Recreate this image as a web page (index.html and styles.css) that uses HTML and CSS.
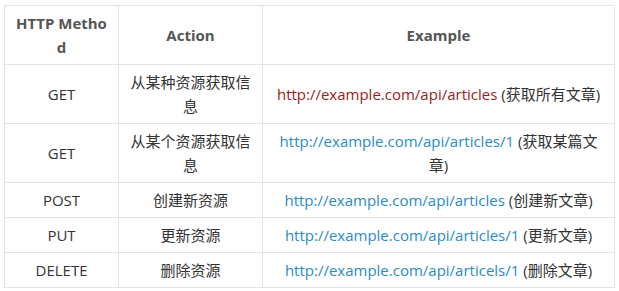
FILE: index.html
```html
<!DOCTYPE html>
<html>
<head>
<meta charset="utf-8">
<link rel="stylesheet" href="styles.css">
</head>
<body>
<table class="api-table">
  <colgroup>
    <col class="c1"><col class="c2"><col class="c3">
  </colgroup>
  <thead>
    <tr><th>HTTP Method</th><th>Action</th><th>Example</th></tr>
  </thead>
  <tbody>
    <tr><td>GET</td><td>从某种资源获取信息</td><td><a class="visited">http://example.com/api/articles</a> (获取所有文章)</td></tr>
    <tr><td>GET</td><td>从某个资源获取信息</td><td><a>http://example.com/api/articles/1</a> (获取某篇文章)</td></tr>
    <tr><td>POST</td><td>创建新资源</td><td><a>http://example.com/api/articles</a> (创建新文章)</td></tr>
    <tr><td>PUT</td><td>更新资源</td><td><a>http://example.com/api/articles/1</a> (更新文章)</td></tr>
    <tr><td>DELETE</td><td>删除资源</td><td><a>http://example.com/api/articels/1</a> (删除文章)</td></tr>
  </tbody>
</table>
</body>
</html>
```

FILE: styles.css
```css
html, body {
  margin: 0;
  padding: 0;
  background: #fff;
}
body {
  padding: 5px 0 0 4px;
  font-family: "Open Sans", "Noto Sans CJK SC", sans-serif;
  font-size: 15px;
  color: #333;
}
.api-table {
  border-collapse: collapse;
  table-layout: fixed;
  width: 610px;
}
.c1 { width: 114px; }
.c2 { width: 144px; }
.c3 { width: 352px; }
.api-table th,
.api-table td {
  border: 1px solid #e3e3e3;
  padding: 5px 10px;
  line-height: 24px;
  text-align: center;
  vertical-align: middle;
  word-break: break-all;
}
.api-table th {
  font-weight: bold;
  color: #555;
}
.api-table a {
  color: #2b8bc4;
  text-decoration: none;
}
.api-table a.visited {
  color: #9b1c1c;
}
```
